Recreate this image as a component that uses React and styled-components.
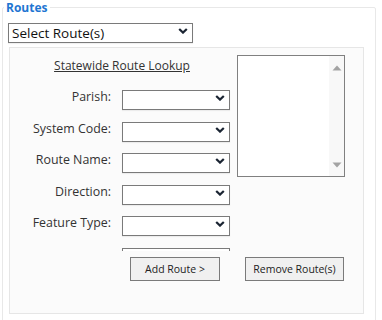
import React from "react";
import styled, { createGlobalStyle } from "styled-components";

const Global = createGlobalStyle`
  html, body { margin: 0; padding: 0; background: #fff; }
  body { font-family: "Open Sans", "Noto Sans", sans-serif; color: #333; }
`;

const Fieldset = styled.fieldset`
  box-sizing: border-box;
  width: 374px;
  height: 340px;
  margin: 0 0 0 2px;
  padding: 6px 11px 0 5px;
  border: 1px solid #e8e8e8;
  border-radius: 2px;
`;

const Legend = styled.legend`
  padding: 0 2px;
  margin-left: -4px;
  font-size: 12px;
  font-weight: 700;
  line-height: 15px;
  color: #1f76d2;
`;

const SelectWrap = styled.div`
  position: relative;
  width: ${(p) => p.$w}px;
  height: ${(p) => p.$h}px;
`;

const NativeSelect = styled.select`
  appearance: none;
  -webkit-appearance: none;
  box-sizing: border-box;
  width: 100%;
  height: 100%;
  margin: 0;
  padding: 0 22px 0 3px;
  border: 1px solid #7a7a7a;
  border-radius: 0;
  background: #fff;
  font-family: "Open Sans", "Noto Sans", sans-serif;
  font-size: ${(p) => p.$fs || 13}px;
  color: #111;
  box-shadow: 0 1px 1px rgba(0, 0, 0, 0.06);
`;

const Chevron = styled.svg`
  position: absolute;
  right: ${(p) => p.$r}px;
  top: 50%;
  transform: translateY(-50%);
  pointer-events: none;
`;

function Dropdown({ w, h, fs, r = 5, children }) {
  return (
    <SelectWrap $w={w} $h={h}>
      <NativeSelect $fs={fs}>{children}</NativeSelect>
      <Chevron $r={r} width="10" height="6" viewBox="0 0 10 6">
        <path d="M1.2 1 L5 4.6 L8.8 1" fill="none" stroke="#1b2533" strokeWidth="2.2" />
      </Chevron>
    </SelectWrap>
  );
}

const Panel = styled.div`
  box-sizing: border-box;
  width: 355px;
  height: 267px;
  margin: 6px 0 0 1px;
  border: 1px solid #e6e6e6;
  background: #fbfbfb;
  display: flex;
  flex-direction: column;
`;

const TopRow = styled.div`
  display: flex;
  align-items: flex-start;
`;

const FormColumn = styled.div`
  box-sizing: border-box;
  width: 224px;
  height: 203px;
  overflow: hidden;
  padding-top: 9px;
  display: flex;
  flex-direction: column;
  align-items: stretch;
`;

const Title = styled.div`
  text-align: center;
  font-size: 12px;
  line-height: 18px;
  text-decoration: underline;
  color: #333;
  margin-bottom: 13px;
`;

const Rows = styled.div`
  display: flex;
  flex-direction: column;
  gap: 11.6px;
`;

const Row = styled.div`
  display: grid;
  grid-template-columns: 101px 108px;
  column-gap: 11px;
  align-items: center;
  flex: none;
`;

const Label = styled.label`
  text-align: right;
  font-size: 12.4px;
  line-height: 16px;
  color: #333;
  padding-bottom: 2px;
`;

const ListBox = styled.div`
  box-sizing: border-box;
  width: 108px;
  height: 122px;
  margin: 7px 0 0 3px;
  border: 1px solid #808080;
  background: #fff;
  display: flex;
  justify-content: flex-end;
`;

const ScrollTrack = styled.div`
  width: 15px;
  background: #f8f8f8;
  display: flex;
  flex-direction: column;
  justify-content: space-between;
  align-items: center;
  padding: 9px 0 8px;
`;

const ButtonRow = styled.div`
  display: flex;
  gap: 25px;
  padding: 6px 0 0 120px;
`;

const Button = styled.button`
  box-sizing: border-box;
  width: ${(p) => p.$w}px;
  height: 24px;
  margin: 0;
  padding: 0;
  border: 1px solid #7a7a7a;
  border-radius: 0;
  background: #f0f0f0;
  font-family: "Open Sans", "Noto Sans", sans-serif;
  font-size: 10.5px;
  color: #222;
`;

const fields = ["Parish:", "System Code:", "Route Name:", "Direction:", "Feature Type:", ""];

export default function App() {
  return (
    <>
      <Global />
      <Fieldset>
        <Legend>Routes</Legend>
        <Dropdown w={185} h={20} fs={13.5} r={5}>
          <option>Select Route(s)</option>
        </Dropdown>
        <Panel>
          <TopRow>
            <FormColumn>
              <Title>Statewide Route Lookup</Title>
              <Rows>
                {fields.map((f, i) => (
                  <Row key={i}>
                    <Label>{f}</Label>
                    <Dropdown w={108} h={20} r={5}>
                      <option></option>
                    </Dropdown>
                  </Row>
                ))}
              </Rows>
            </FormColumn>
            <ListBox>
              <ScrollTrack>
                <svg width="10" height="6" viewBox="0 0 10 6">
                  <path d="M0.5 5.5 L5 0.5 L9.5 5.5 Z" fill="#a3a3a3" />
                </svg>
                <svg width="10" height="6" viewBox="0 0 10 6">
                  <path d="M0.5 0.5 L5 5.5 L9.5 0.5 Z" fill="#a3a3a3" />
                </svg>
              </ScrollTrack>
            </ListBox>
          </TopRow>
          <ButtonRow>
            <Button $w={90}>Add Route &gt;</Button>
            <Button $w={99}>Remove Route(s)</Button>
          </ButtonRow>
        </Panel>
      </Fieldset>
    </>
  );
}
